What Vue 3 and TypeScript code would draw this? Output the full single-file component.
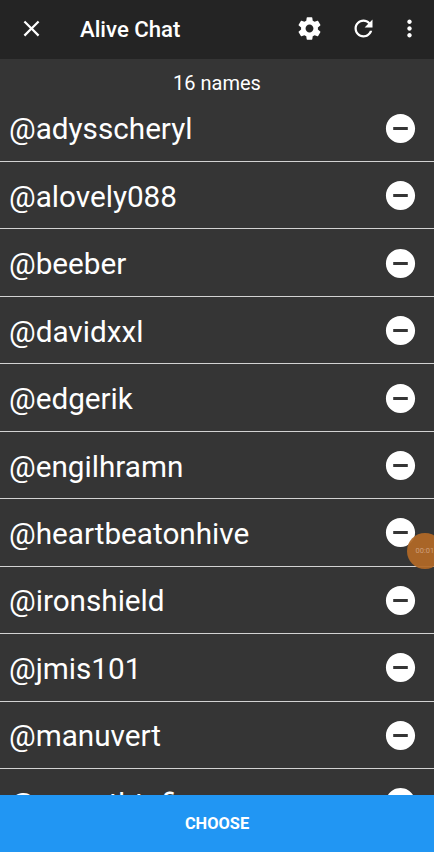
<script setup lang="ts">
import { ref } from 'vue'

const title = 'Alive Chat'
const total = 16
const names = ref<string[]>([
  'adysscheryl',
  'alovely088',
  'beeber',
  'davidxxl',
  'edgerik',
  'engilhramn',
  'heartbeatonhive',
  'ironshield',
  'jmis101',
  'manuvert',
  'mypathtofire',
])

function remove(name: string): void {
  names.value = names.value.filter((n) => n !== name)
}
</script>

<template>
  <div class="screen">
    <header class="bar">
      <button class="icon close" aria-label="Close">
        <svg viewBox="0 0 24 24"><path d="M19 6.41L17.59 5 12 10.59 6.41 5 5 6.41 10.59 12 5 17.59 6.41 19 12 13.41 17.59 19 19 17.59 13.41 12z" /></svg>
      </button>
      <h1 class="title">{{ title }}</h1>
      <button class="icon settings" aria-label="Settings">
        <svg viewBox="0 0 24 24"><path d="M19.43 12.98c.04-.32.07-.64.07-.98s-.03-.66-.07-.98l2.11-1.65c.19-.15.24-.42.12-.64l-2-3.46c-.12-.22-.39-.3-.61-.22l-2.49 1c-.52-.4-1.08-.73-1.69-.98l-.38-2.65C14.46 2.18 14.25 2 14 2h-4c-.25 0-.46.18-.49.42l-.38 2.65c-.61.25-1.17.59-1.69.98l-2.49-1c-.23-.09-.49 0-.61.22l-2 3.46c-.13.22-.07.49.12.64l2.11 1.65c-.04.32-.07.65-.07.98s.03.66.07.98l-2.11 1.65c-.19.15-.24.42-.12.64l2 3.46c.12.22.39.3.61.22l2.49-1c.52.4 1.08.73 1.69.98l.38 2.65c.03.24.24.42.49.42h4c.25 0 .46-.18.49-.42l.38-2.65c.61-.25 1.17-.59 1.69-.98l2.49 1c.23.09.49 0 .61-.22l2-3.46c.12-.22.07-.49-.12-.64l-2.11-1.65zM12 15.5c-1.93 0-3.5-1.57-3.5-3.5s1.57-3.5 3.5-3.5 3.5 1.57 3.5 3.5-1.57 3.5-3.5 3.5z" /></svg>
      </button>
      <button class="icon refresh" aria-label="Refresh">
        <svg viewBox="0 0 24 24"><path d="M17.65 6.35C16.2 4.9 14.21 4 12 4c-4.42 0-7.99 3.58-7.99 8s3.57 8 7.99 8c3.73 0 6.84-2.55 7.73-6h-2.08c-.82 2.33-3.04 4-5.65 4-3.31 0-6-2.69-6-6s2.69-6 6-6c1.66 0 3.14.69 4.22 1.78L13 11h7V4l-2.35 2.35z" /></svg>
      </button>
      <button class="icon more" aria-label="More options">
        <svg viewBox="0 0 24 24"><path d="M12 8c1.1 0 2-.9 2-2s-.9-2-2-2-2 .9-2 2 .9 2 2 2zm0 2c-1.1 0-2 .9-2 2s.9 2 2 2 2-.9 2-2-.9-2-2-2zm0 6c-1.1 0-2 .9-2 2s.9 2 2 2 2-.9 2-2-.9-2-2-2z" /></svg>
      </button>
    </header>

    <main class="content">
      <p class="count">{{ total }} names</p>
      <ul class="list">
        <li v-for="name in names" :key="name" class="row">
          <span class="name">@{{ name }}</span>
          <button class="remove" aria-label="Remove" @click="remove(name)">
            <svg viewBox="0 0 24 24"><path d="M12 2C6.48 2 2 6.48 2 12s4.48 10 10 10 10-4.48 10-10S17.52 2 12 2zm5 11H7v-2h10v2z" /></svg>
          </button>
        </li>
      </ul>
    </main>

    <button class="choose">CHOOSE</button>
    <div class="timer">00:01</div>
  </div>
</template>

<style>
body {
  margin: 0;
  background: #353535;
}
</style>

<style scoped>
.screen {
  position: relative;
  display: flex;
  flex-direction: column;
  height: 852px;
  overflow: hidden;
  background: #353535;
  color: #fff;
  font-family: Roboto, sans-serif;
}

button {
  padding: 0;
  border: 0;
  background: none;
  color: inherit;
  font: inherit;
}

svg {
  display: block;
  width: 100%;
  height: 100%;
  fill: currentColor;
}

.bar {
  display: flex;
  flex: none;
  align-items: center;
  box-sizing: border-box;
  height: 59px;
  padding: 0 11px 2px 17.5px;
  background: #242424;
}

.icon {
  flex: none;
  width: 27px;
  height: 27px;
}

.title {
  flex: 1;
  margin: 0 0 0 35.5px;
  font-size: 22.2px;
  font-weight: 500;
  line-height: 28px;
}

.refresh {
  margin-left: 26.5px;
}

.more {
  margin-left: 19.5px;
}

.content {
  flex: 1;
  min-height: 0;
  overflow: hidden;
}

.count {
  margin: 0;
  padding: 11.6px 0 0;
  font-size: 20px;
  line-height: 24px;
  text-align: center;
}

.list {
  margin: 0;
  padding: 0;
  list-style: none;
}

.row {
  display: flex;
  align-items: center;
  justify-content: space-between;
  box-sizing: border-box;
  height: 67.45px;
  padding: 0 16px 0 9px;
  border-bottom: 1px solid #d2d2d2;
}

.name {
  padding-top: 3px;
  font-size: 29.7px;
  line-height: 36px;
}

.remove {
  width: 35px;
  height: 35px;
  padding-top: 1px;
  box-sizing: content-box;
}

.choose {
  flex: none;
  height: 57.4px;
  padding-top: 1px;
  background: #2196f3;
  font-size: 16.4px;
  font-weight: 700;
}

.timer {
  position: absolute;
  top: 533px;
  left: 407px;
  width: 36px;
  height: 36px;
  border-radius: 50%;
  background: rgba(176, 104, 38, 0.94);
  color: #cf9f7a;
  font-size: 7.5px;
  line-height: 36px;
  text-indent: 8.5px;
}
</style>
